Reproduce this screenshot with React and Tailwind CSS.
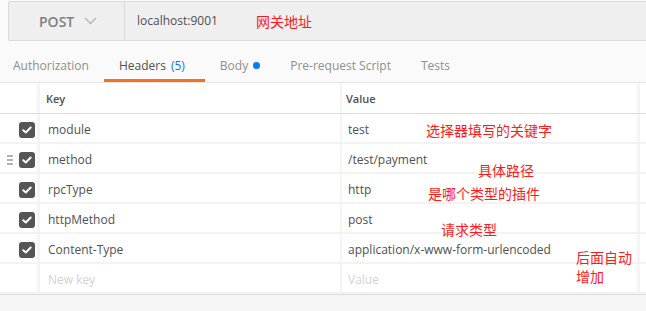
import React from "react";

const rows = [
  { key: "module", value: "test" },
  { key: "method", value: "/test/payment", handle: true },
  { key: "rpcType", value: "http" },
  { key: "httpMethod", value: "post" },
  { key: "Content-Type", value: "application/x-www-form-urlencoded" },
];

const notes = [
  { text: "网关地址", cls: "left-[256px] top-[11px]" },
  { text: "选择器填写的关键字", cls: "left-[426px] top-[120px]" },
  { text: "具体路径", cls: "left-[478px] top-[160px]" },
  { text: "是哪个类型的插件", cls: "left-[428px] top-[183px]" },
  { text: "请求类型", cls: "left-[441px] top-[219px]" },
  { text: "后面自动", cls: "left-[576px] top-[247px]" },
  { text: "增加", cls: "left-[576px] top-[266px]" },
];

const Checkbox = () => (
  <div className="w-[16px] h-[16px] rounded-[3px] bg-[#555555] flex items-center justify-center">
    <svg width="10" height="8" viewBox="0 0 10 8" fill="none">
      <path d="M1.3 4.2 L3.8 6.5 L8.7 1.5" stroke="#ffffff" strokeWidth="1.9" strokeLinecap="round" strokeLinejoin="round" />
    </svg>
  </div>
);

const Handle = () => (
  <div className="flex flex-col gap-[2px] w-[6px]">
    <div className="h-[2px] bg-[#b3b3b3]" />
    <div className="h-[2px] bg-[#b3b3b3]" />
    <div className="h-[2px] bg-[#b3b3b3]" />
  </div>
);

const Row = ({ left, keyText, valueText, placeholder }) => (
  <div className="flex h-[30px] border-b-2 border-[#f3f3f3]">
    <div className="w-[37px] flex items-center pl-[7px] pt-[3px]">{left}</div>
    <div className="w-[3px] bg-[#f5f5f5]" />
    <div
      className={`w-[300px] flex items-center pl-[8px] pt-[3px] text-[12px] ${
        placeholder ? "text-[#d3d3d3]" : "text-[#505050]"
      }`}
    >
      {keyText}
    </div>
    <div className="w-[2px] bg-[#f5f5f5]" />
    <div
      className={`w-[295px] flex items-center pl-[6px] pt-[3px] text-[12px] ${
        placeholder ? "text-[#d3d3d3]" : "text-[#505050]"
      }`}
    >
      {valueText}
    </div>
    <div className="w-[3px] bg-[#f5f5f5]" />
  </div>
);

const Tab = ({ children, active }) => (
  <div
    className={`h-full flex items-center pt-[11px] pl-[15px] border-b-[3px] ${
      active
        ? "pr-[20px] border-[#f47023] text-[#505050]"
        : "pr-[15px] border-transparent text-[#8f8f8f]"
    }`}
  >
    {children}
  </div>
);

export default function App() {
  return (
    <div
      className="relative w-[646px] h-[311px] overflow-hidden bg-[#f5f5f5]"
      style={{ fontFamily: '"Open Sans", "Noto Sans CJK SC", sans-serif' }}
    >
      {/* request bar */}
      <div className="bg-[#fafafa] pt-[1px] pl-[8px]">
        <div className="h-[40px] flex bg-[#efefef] border border-r-0 border-[#dadada] rounded-l-[2px]">
          <div className="w-[116px] flex items-center pl-[30px] gap-[10px] border-r border-[#dadada]">
            <span className="text-[14px] font-semibold text-[#7f7f7f]">POST</span>
            <svg width="13" height="8" viewBox="0 0 13 8" fill="none">
              <path d="M1 1 L6.5 6.5 L12 1" stroke="#b8b8b8" strokeWidth="1.5" />
            </svg>
          </div>
          <div className="flex items-center pl-[12px] text-[12px] text-[#505050]">
            localhost:9001
          </div>
        </div>
      </div>

      {/* tabs */}
      <div className="h-[42px] bg-[#fafafa] flex text-[12px] border-b border-[#e4e4e4]">
        <div className="flex h-full -ml-[2px]">
          <Tab>Authorization</Tab>
          <Tab active>
            Headers <span className="ml-[5px] text-[#097bed]">(5)</span>
          </Tab>
          <Tab>
            Body
            <span className="ml-[5px] w-[7px] h-[7px] rounded-full bg-[#097bed]" />
          </Tab>
          <Tab>Pre-request Script</Tab>
          <Tab>Tests</Tab>
        </div>
      </div>

      {/* table */}
      <div className="bg-white border-b border-[#dcdcdc]">
        <div className="flex h-[31px] border-b border-[#dcdcdc] text-[11px] font-semibold text-[#505050]">
          <div className="w-[37px]" />
          <div className="w-[3px] bg-[#f5f5f5]" />
          <div className="w-[300px] flex items-center pl-[6px] pt-[2px]">Key</div>
          <div className="w-[2px] bg-[#f5f5f5]" />
          <div className="w-[295px] flex items-center pl-[4px] pt-[2px]">Value</div>
          <div className="w-[3px] bg-[#f5f5f5]" />
        </div>
        {rows.map((r) => (
          <Row
            key={r.key}
            keyText={r.key}
            valueText={r.value}
            left={
              <div className="flex items-center gap-[6px]">
                <div className="w-[6px]">{r.handle && <Handle />}</div>
                <Checkbox />
              </div>
            }
          />
        ))}
        <Row keyText="New key" valueText="Value" placeholder />
      </div>

      {/* annotations */}
      {notes.map((n) => (
        <div
          key={n.text}
          className={`absolute text-[14px] leading-[20px] text-[#ff1a1a] whitespace-nowrap ${n.cls}`}
          style={{ fontFamily: '"Noto Sans CJK SC", sans-serif' }}
        >
          {n.text}
        </div>
      ))}
    </div>
  );
}
